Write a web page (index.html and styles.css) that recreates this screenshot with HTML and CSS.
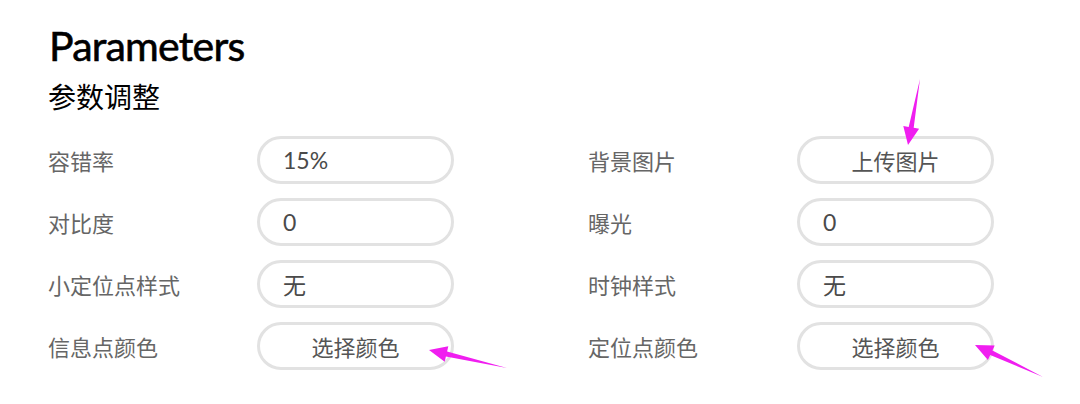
FILE: index.html
```html
<!DOCTYPE html>
<html lang="zh-CN">
<head>
  <meta charset="UTF-8">
  <meta name="viewport" content="width=device-width, initial-scale=1.0">
  <title>Parameters</title>
  <link rel="stylesheet" href="styles.css">
</head>
<body>

<div class="panel">
  <h1 class="title">Parameters</h1>
  <h2 class="subtitle">参数调整</h2>

  <div class="params">
    <div class="field"><span class="label">容错率</span><div class="box">15%</div></div>
    <div class="field"><span class="label">背景图片</span><div class="box center">上传图片</div></div>
    <div class="field"><span class="label">对比度</span><div class="box">0</div></div>
    <div class="field"><span class="label">曝光</span><div class="box">0</div></div>
    <div class="field"><span class="label">小定位点样式</span><div class="box">无</div></div>
    <div class="field"><span class="label">时钟样式</span><div class="box">无</div></div>
    <div class="field"><span class="label">信息点颜色</span><div class="box center">选择颜色</div></div>
    <div class="field"><span class="label">定位点颜色</span><div class="box center">选择颜色</div></div>
  </div>

  <!-- annotation arrows drawn on top of the screenshot -->
  <svg class="arrows" width="1080" height="404" viewBox="0 0 1080 404">
    <polygon points="920,79 913.7,127.7 919.1,128.7 908,145 903.3,125.9 908.7,126.9" />
    <polygon points="507,368 447.1,351.6 448.3,346.2 429,350 444.7,361.8 445.9,356.4" />
    <polygon points="1043,377 992.4,350.4 994.7,345.5 975,345 987.9,359.9 990.2,355" />
  </svg>
</div>

</body>
</html>
```

FILE: styles.css
```css
body {
  margin: 0;
  background-color: #fff;
  font-family: Lato, "Noto Sans CJK SC", sans-serif;
  overflow: hidden;
}

.panel {
  position: relative;
  width: 1080px;
  height: 404px;
  padding: 22px 0 0 49px;
  box-sizing: border-box;
}

.title {
  margin: 0;
  font-size: 41px;
  line-height: 48px;
  font-weight: 400;
  letter-spacing: -0.8px;
  color: #000;
  -webkit-text-stroke: 0.6px #000;
}

.subtitle {
  margin: 6px 0 0 -1px;
  font-family: "Noto Sans CJK SC", sans-serif;
  font-size: 28px;
  line-height: 40px;
  font-weight: 400;
  color: #000;
}

.params {
  display: grid;
  grid-template-columns: 540px 540px;
  row-gap: 14px;
  margin-top: 20px;
  margin-left: -1px;
}

.field {
  display: flex;
  align-items: center;
}

.label {
  width: 209px;
  font-family: "Noto Sans CJK SC", sans-serif;
  font-size: 22px;
  color: #666;
}

.box {
  width: 197px;
  height: 48px;
  box-sizing: border-box;
  border: 3px solid #e2e2e2;
  border-radius: 24px;
  padding: 0 23px;
  display: flex;
  align-items: center;
  font-size: 23px;
  color: #4a4a4a;
}

.box.center {
  justify-content: center;
  font-family: "Noto Sans CJK SC", sans-serif;
  font-size: 22px;
  color: #555;
}

.arrows {
  position: absolute;
  top: 0;
  left: 0;
  pointer-events: none;
}

.arrows polygon {
  fill: #f01ef0;
}
```
